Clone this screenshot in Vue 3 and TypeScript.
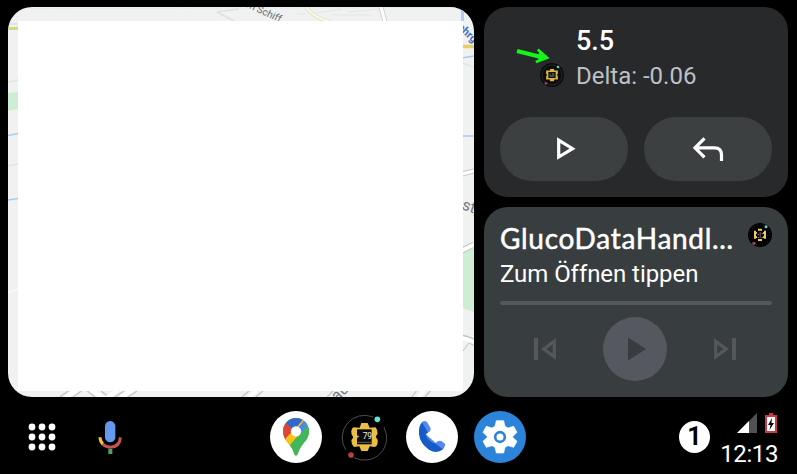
<script setup lang="ts">
import { ref } from 'vue'

interface Reading {
  value: string
  delta: string
}

const reading = ref<Reading>({ value: '5.5', delta: 'Delta: -0.06' })
const media = ref({ title: 'GlucoDataHandl…', subtitle: 'Zum Öffnen tippen' })
const notifications = ref<number>(1)
const clock = ref<string>('12:13')
const dots: number[] = [4, 14, 24]
</script>

<template>
  <div class="screen">
    <main class="cards">
      <section class="map">
        <svg class="map-art" viewBox="8 7 466 390">
          <rect x="8" y="7" width="466" height="390" fill="#f0f2f2" />
          <path d="M8 24h10" stroke="#c5dfd0" />
          <path d="M8 28.5h10" stroke="#d2d984" stroke-width="3" />
          <path d="M8 82l10-2M8 166l10-2" stroke="#e2e4e4" stroke-width="1.5" fill="none" />
          <path d="M8 93l10-1v17l-10 2z" fill="#ceedd5" />
          <path d="M8 135.5l10-2M8 200l10-1.5" stroke="#aec9f0" stroke-width="1.5" />
          <path d="M8 293l10-4" stroke="#fff" />
          <path d="M30 8.5l440-1" stroke="#e8ebe8" />
          <path d="M217 12l17 9M217 12l22-3" stroke="#dfe1e1" stroke-width="1.5" fill="none" />
          <path d="M306 7q8 11 25 15" stroke="#e3e6cc" stroke-width="4" fill="none" />
          <path d="M306 7q8 11 25 15" stroke="#f7f8ee" stroke-width="2" fill="none" />
          <path d="M316 13l26-4M333 15h38M297 14h8M347 12l32-3" stroke="#e2e5e5" fill="none" />
          <path d="M381 7l4 15" stroke="#cfd2d3" stroke-width="5" />
          <path d="M381 7l4 15" stroke="#fff" stroke-width="3" />
          <text x="240" y="4" transform="rotate(25 240 4)" class="street">Am Schiff</text>
          <path d="M461 7v14h3v-14z" fill="#b5cdf3" />
          <text x="457" y="28" transform="rotate(43 457 28)" class="transit">ehrg</text>
          <path d="M462 46.5h12" stroke="#e5cf65" stroke-width="3.5" />
          <path d="M462 58l12-2M462 136h12" stroke="#acc8ef" stroke-width="1.4" />
          <path d="M462 63l12 4" stroke="#d7eedb" stroke-width="1.5" />
          <path d="M462 174l12-3" stroke="#c6c8ca" stroke-width="5" />
          <path d="M462 174l12-3" stroke="#fff" stroke-width="3" />
          <text x="461" y="209" transform="rotate(19 461 209)" class="big-street">st,</text>
          <path d="M462 252l12-6v66l-12-4z" fill="#ceedd5" />
          <path d="M462 250.500l12-6" stroke="#bfc3c3" stroke-width="6" />
          <path d="M462 250.500l12-6" stroke="#fff" stroke-width="4" />
          <path d="M462 337q6 1 12 4" stroke="#bfc2c3" stroke-width="5" fill="none" />
          <path d="M462 338q6 1 12 4" stroke="#fff" stroke-width="4" fill="none" />
          <path d="M463 351l6-8 6 3" stroke="#bfc2c3" fill="none" />
          <path d="M57 399l14-10M73 397l10-7M86 390l9 7M101 391l8 6M115 397l9-6M128 397l9-6M242 397l8-7M256 397l8-7M327 397l7-7M412 397l5-7M425 397l6-7" stroke="#c0c4c5" stroke-width="1.2" fill="none" />
          <path d="M66 397l11-7M91 390l14 9 13-9M121 397l12-7M249 397l8-7M418 397l7-7" stroke="#fff" stroke-width="4" fill="none" />
          <text x="337" y="402" transform="rotate(-43 337 402)" class="big-street">au</text>
          <rect x="18" y="21" width="445" height="370" fill="#fff" />
        </svg>
      </section>

      <div class="side">
        <section class="card reading">
          <div class="reading-head">
            <svg class="trend" viewBox="500 40 60 60">
              <path d="M517 51L541 57" stroke="#15f51a" stroke-width="4" />
              <path d="M537.800 49.500L547 57.800 535.800 62" fill="none" stroke="#15f51a" stroke-width="2.800" />
              <path d="M539 52l8 5.700-9 3.800z" fill="#15f51a" />
            </svg>
            <svg class="app-mini" viewBox="0 0 72 72">
              <circle cx="36" cy="36" r="36" fill="#0b0c0d" />
              <circle cx="36" cy="36" r="30" fill="none" stroke="#343638" stroke-width="2" />
              <path d="M29 23l2-5h11l2 5 9-1 1 9-3 5 3 6-1 8-9-1-3 6H31l-3-6-9 1-1-9 3-5-3-5 1-9z" fill="#dcb742" />
              <path d="M25 27h22v18H25z" fill="#101113" />
              <path d="M29 34h3m4-1h7M29 39h14" stroke="#b8b8a8" stroke-width="2" />
              <circle cx="54" cy="12" r="4" fill="#5ccbc3" /><circle cx="18" cy="61" r="4" fill="#a94349" />
            </svg>
            <div>
              <div class="value">{{ reading.value }}</div>
              <div class="delta">{{ reading.delta }}</div>
            </div>
          </div>
          <div class="actions">
            <button type="button" class="pill" aria-label="Play">
              <svg viewBox="0 0 128 64"><path d="M58.700 23.200v16.800L72.500 31.700z" fill="none" stroke="#fff" stroke-width="3.200" /></svg>
            </button>
            <button type="button" class="pill" aria-label="Reply">
              <svg viewBox="0 0 128 64"><path d="M60.500 21.300L51 30.800l9.500 9.500M51 30.800h19.500q7 0 7 7v6.200" fill="none" stroke="#fff" stroke-width="3.200" /></svg>
            </button>
          </div>
        </section>

        <section class="card media">
          <div class="media-head">
            <h1>{{ media.title }}</h1>
            <svg class="app-mini" viewBox="0 0 72 72">
              <circle cx="36" cy="36" r="36" fill="#000" />
              <circle cx="36" cy="36" r="30" fill="none" stroke="#55595c" stroke-width="2" stroke-dasharray="2 7.400" />
              <path d="M30 17h12v6H30zM30 48h12v6H30zM18 23h6v24h-6zM48 23h6v24h-6zM24 27h3v5h-3zM24 40h3v5h-3zM45 27h3v5h-3zM45 40h3v5h-3z" fill="#f1c963" />
              <path d="M29 35h3M35 30h3M35 36h3M41 32h3M35 42h3M29 44h3M41 44h3" stroke="#ddd" stroke-width="3" />
              <circle cx="54" cy="11" r="4.500" fill="#68d3bd" /><circle cx="18" cy="61" r="5" fill="#a64247" />
            </svg>
          </div>
          <p>{{ media.subtitle }}</p>
          <div class="progress"></div>
          <div class="transport">
            <svg class="skip" viewBox="0 0 24 24"><path d="M1 1h4v22H1z" fill="#54585d" /><path d="M21.300 4.200v15.600L10.800 12z" fill="none" stroke="#54585d" stroke-width="3.200" /></svg>
            <button type="button" class="play" aria-label="Play">
              <svg viewBox="0 0 64 64"><path d="M25 20.500v23L43 32z" fill="#383d40" /></svg>
            </button>
            <svg class="skip" viewBox="0 0 24 24"><path d="M19 1h4v22h-4z" fill="#54585d" /><path d="M2.700 4.200v15.600L13.200 12z" fill="none" stroke="#54585d" stroke-width="3.200" /></svg>
          </div>
        </section>
      </div>
    </main>

    <nav class="bar">
      <div class="tools">
        <svg class="launcher" viewBox="0 0 28 28">
          <template v-for="y in dots" :key="y">
            <circle v-for="x in dots" :key="x" :cx="x" :cy="y" r="3.400" fill="#fff" />
          </template>
        </svg>
        <svg class="mic" viewBox="293 60 72 104">
          <rect x="314" y="63" width="31" height="64" rx="15.500" fill="#6499ee" />
          <path d="M299 112q0 12 9 21" fill="none" stroke="#f0c23f" stroke-width="9" />
          <path d="M307 132q10 10 23 10 29-2 30-30" fill="none" stroke="#c95154" stroke-width="9" />
          <path d="M324 147h12v15h-12z" fill="#43a669" />
        </svg>
      </div>

      <div class="apps">
        <svg viewBox="30 33 156 156">
          <defs>
            <clipPath id="pin"><path d="M108 167c-5 0-6-10-11-20-8-16-28-29-28-53 0-22 17-40 39-40s39 18 39 40c0 24-20 37-28 53-5 10-6 20-11 20z" /></clipPath>
          </defs>
          <circle cx="108" cy="111" r="78" fill="#fff" />
          <g clip-path="url(#pin)">
            <path d="M60 50h100v120H60z" fill="#43b65a" />
            <path d="M60 50h100v20l-52 24-10 40-16 18H60z" fill="#f8c314" />
            <path d="M60 60l18 9 30 25-34 40H60z" fill="#dc4639" />
            <path d="M72 121l36-40 12 23-36 41z" fill="#f8c314" />
            <path d="M76 68l26 23 36-43H76z" fill="#3267ce" />
            <path d="M103 96l33-38 20 10v32h-28z" fill="#4d8aef" />
            <path d="M150 62l-67 82 25 30 52-50V62z" fill="#43b65a" />
            <path d="M108 94l28-36 14 3-25 38z" fill="#4d8aef" />
          </g>
          <circle cx="108" cy="94" r="15.500" fill="#fff" />
        </svg>
        <svg viewBox="234 33 156 156">
          <path d="M339 51A67 67 0 0 0 257 149M372 82A67 67 0 0 1 282 173" fill="none" stroke="#5b5b5b" stroke-width="2.500" />
          <path d="M299 83l5-14h19l6 14 18-1q7 9 6 20-7 7-4 11 6 5 4 16-2 11-9 12l-15-2-6 14h-19l-6-14-16 2q-9-10-8-21 8-8 4-11-5-5-4-16 1-9 7-11z" fill="#eabf43" />
          <path d="M291 88h44v45h-44z" fill="#080a0b" />
          <text x="289" y="115" class="tiny">+</text><text x="308" y="117" class="watch">79</text>
          <path d="M292 127h42" stroke="#92925d" stroke-width="2" />
          <circle cx="352" cy="58" r="8.500" fill="#65e1d5" /><circle cx="273" cy="165" r="8.500" fill="#b83f46" />
        </svg>
        <svg viewBox="438 33 156 156">
          <circle cx="516" cy="111" r="78" fill="#fff" />
          <path d="M487 112l10-12q4 15 18 24l13 6-6 14q-26-8-35-32z" fill="#9bbcf6" />
          <path d="M486 66q8-6 15 0l10 17q4 8-6 14l-8 5 30 27q8-9 17-6l11 8q2 8-8 18l-20-6-38-35z" fill="#5589ef" />
          <path d="M486 67l18 31-7 4q4 18 22 26l8 3 22 17q-19 15-42 1-27-18-30-46-2-25 9-36z" fill="#165cc7" />
        </svg>
        <svg viewBox="642 33 156 156">
          <circle cx="720" cy="111" r="78" fill="#2b84d9" />
          <path d="M709 62h22l4 17 9 5 17-5 10 18-13 13v2l13 12-10 18-17-5-9 5-4 17h-22l-4-17-9-5-17 5-10-18 13-12v-2l-13-13 10-18 17 5 9-5z" fill="#fff" stroke="#fff" stroke-width="2" stroke-linejoin="round" />
          <circle cx="720" cy="111" r="14.500" fill="#fff" stroke="#2b84d9" stroke-width="8" />
        </svg>
      </div>

      <div class="status">
        <span class="badge">{{ notifications }}</span>
        <div class="system">
          <svg class="signals" viewBox="738 412 41 22">
            <path d="M758 413v20h-20z" fill="#515151" /><path d="M750 421v12h-12z" fill="#fff" />
            <path d="M770 413h4v2h4v18h-12v-18h4z" fill="#c83b42" />
            <path d="M768 417h8v14h-8z" fill="#fff" />
            <path d="M773 418l-4 7h2.500l-1 5 4.500-7h-2.500z" fill="#090909" />
          </svg>
          <time>{{ clock }}</time>
        </div>
      </div>
    </nav>
  </div>
</template>

<style>
body {
  background: #000;
}
</style>

<style scoped>
.screen {
  width: 797px;
  height: 474px;
  background: #000;
  font-family: Roboto, sans-serif;
  color: #fff;
  overflow: hidden;
}
svg {
  display: block;
  flex: none;
}
.cards {
  display: flex;
  gap: 10px;
  padding: 7px 9px 0 8px;
  height: 390px;
}
.map {
  width: 466px;
  height: 390px;
  border-radius: 24px;
  overflow: hidden;
}
.map-art {
  width: 466px;
  height: 390px;
}
.street {
  font: 10px Roboto, sans-serif;
  fill: #686b6e;
}
.transit {
  font: bold 11px Roboto, sans-serif;
  fill: #4270c4;
}
.big-street {
  font: 16px Roboto, sans-serif;
  fill: #75787b;
}
.side {
  display: flex;
  flex-direction: column;
  gap: 10px;
  width: 304px;
}
.card {
  box-sizing: border-box;
  height: 190px;
  border-radius: 24px;
  padding: 16px;
}
.reading {
  background: #28292b;
}
.reading-head {
  display: flex;
  height: 94px;
}
.trend {
  width: 60px;
  height: 60px;
  margin: 17px -20px 0 0;
}
.app-mini {
  width: 24px;
  height: 24px;
}
.reading-head .app-mini {
  margin: 40px 12px 0 0;
}
.value {
  padding-top: 1px;
  font-size: 27px;
  font-weight: 500;
  line-height: 35px;
}
.delta {
  font-size: 24px;
  line-height: 34px;
  color: #bdc1c6;
  white-space: nowrap;
}
.actions {
  display: flex;
  gap: 16px;
}
button {
  display: block;
  padding: 0;
  border: 0;
}
.pill {
  width: 128px;
  height: 64px;
  border-radius: 32px;
  background: #3c4041;
}
.pill svg {
  width: 128px;
  height: 64px;
}
.media {
  background: #383d40;
}
.media-head {
  display: flex;
  justify-content: space-between;
}
h1 {
  margin: -1px 0 1px;
  font: 400 28px/32px Lato, sans-serif;
  letter-spacing: 0.7px;
  -webkit-text-stroke: 0.5px #fff;
  white-space: nowrap;
}
.media p {
  margin: 3px 0 10px;
  font-size: 24px;
  line-height: 33px;
  letter-spacing: -0.06px;
}
.progress {
  height: 4px;
  border-radius: 2px;
  background: #55585e;
}
.transport {
  display: flex;
  align-items: center;
  justify-content: space-between;
  padding: 12px 35px 0 33px;
}
.skip {
  width: 24px;
  height: 24px;
}
.play {
  width: 64px;
  height: 64px;
  border-radius: 50%;
  background: #55585e;
}
.bar {
  display: flex;
  padding: 14px 19px 0 28px;
}
.tools {
  display: flex;
  align-items: center;
  gap: 42px;
  height: 52px;
}
.launcher {
  width: 28px;
  height: 28px;
}
.mic {
  width: 24px;
  height: 34.7px;
}
.apps {
  display: flex;
  gap: 16px;
  margin-left: 148px;
}
.apps svg {
  width: 52px;
  height: 52px;
}
.watch {
  font: 25px Roboto, sans-serif;
  fill: #f0f0f0;
}
.tiny {
  font: 15px Roboto, sans-serif;
  fill: #f0f0f0;
}
.status {
  display: flex;
  gap: 10px;
  margin-left: auto;
}
.badge {
  width: 31px;
  height: 32px;
  margin-top: 10px;
  border-radius: 50%;
  background: #fff;
  color: #000;
  font: 700 25px/32px Roboto, sans-serif;
  text-align: center;
}
.system {
  display: flex;
  flex-direction: column;
  align-items: flex-end;
  width: 58px;
}
.signals {
  width: 41px;
  height: 22px;
  margin-top: 1px;
}
time {
  font-size: 24px;
  line-height: 28px;
  letter-spacing: -0.4px;
  margin-top: 6px;
}
</style>
